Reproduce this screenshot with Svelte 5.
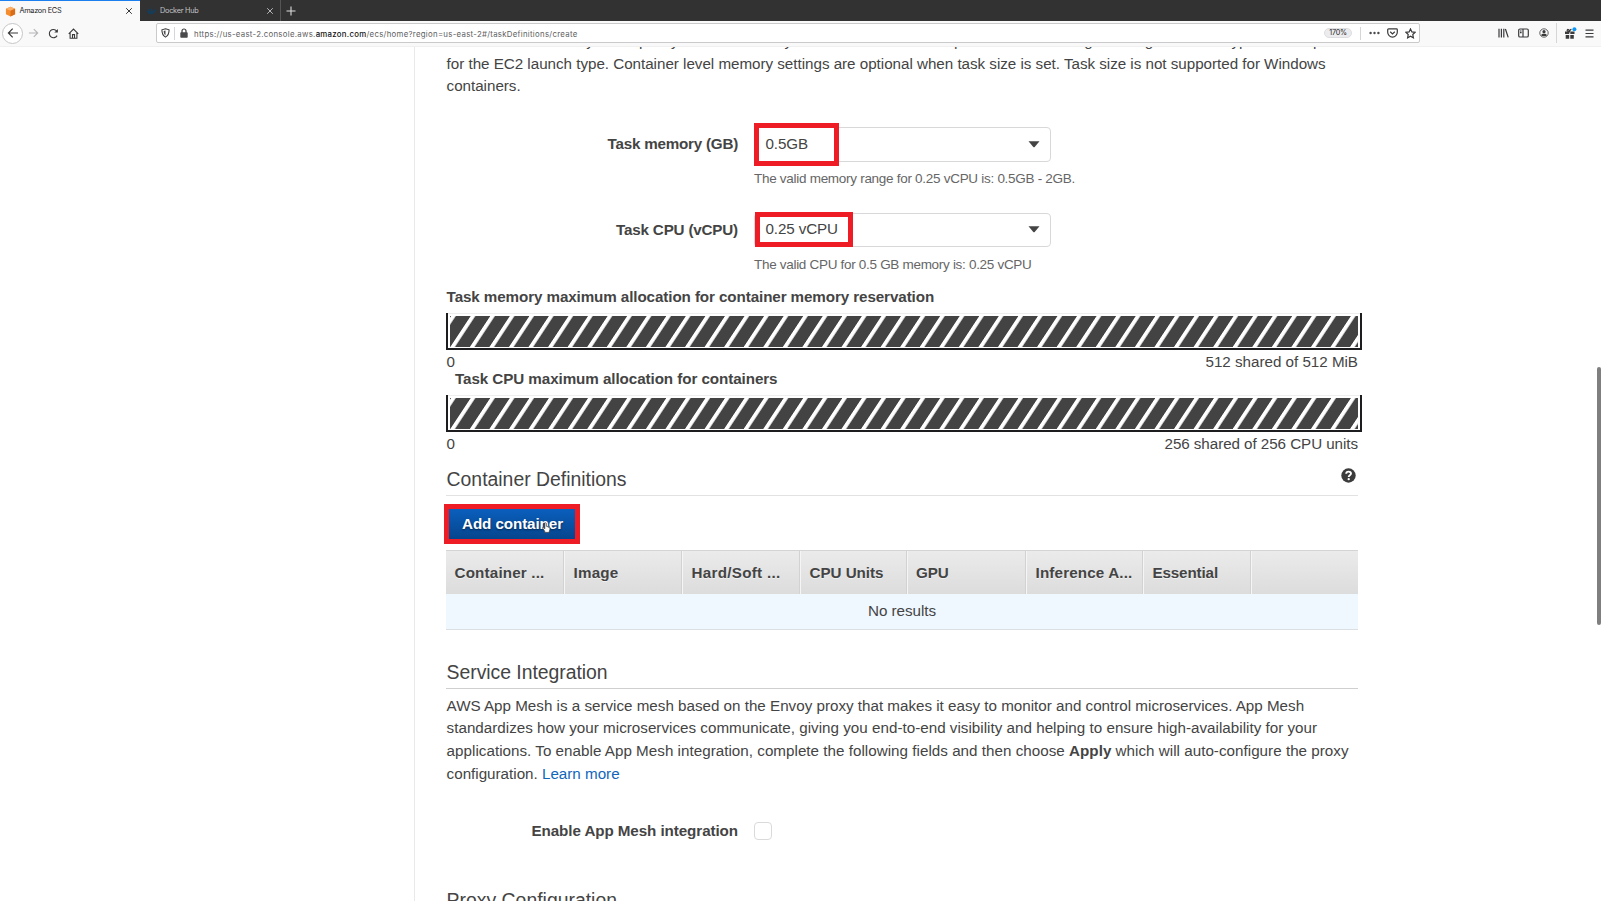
<script>
  // Spreads the letters of a line evenly so that it fills the given width.
  function fit(node, width) {
    const natural = node.getBoundingClientRect().width;
    node.style.letterSpacing = `${(width - natural) / node.textContent.length}px`;
  }

  const intro = [
    ['The task size allows you to specify a fixed size for your task. Task size is required for tasks using the Fargate launch type and is optional', 911],
    ['for the EC2 launch type. Container level memory settings are optional when task size is set. Task size is not supported for Windows', 879],
    ['containers.', 74],
  ];

  const fields = [
    { id: 'mem', label: 'Task memory (GB)', lw: 130.5, value: '0.5GB', vw: 42.5, hint: 'The valid memory range for 0.25 vCPU is: 0.5GB - 2GB.', hw: 321 },
    { id: 'cpu', label: 'Task CPU (vCPU)', lw: 122, value: '0.25 vCPU', vw: 72.5, hint: 'The valid CPU for 0.5 GB memory is: 0.25 vCPU', hw: 277.5 },
  ];

  const bars = [
    { title: 'Task memory maximum allocation for container memory reservation', tw: 487.5, total: '512 shared of 512 MiB', w: 152.5 },
    { title: 'Task CPU maximum allocation for containers', tw: 322.5, total: '256 shared of 256 CPU units', w: 193.5 },
  ];

  const columns = [
    ['Container ...', 90], ['Image', 45], ['Hard/Soft ...', 89], ['CPU Units', 74],
    ['GPU', 32.5], ['Inference A...', 97], ['Essential', 65.5], ['', 0],
  ];
</script>

<div class="window">
  <header>
    <div class="tabs">
      <div class="tab active">
        <svg class="cube" viewBox="0 0 12 12"><path fill="#f58d2f" d="M6 .7 11 3v6L6 11.5 1 9V3z"/><path fill="#f9b06b" d="M6 .7 11 3 6 5.3 1 3z"/><path fill="#d96c16" d="M6 5.3 11 3v6l-5 2.5z"/></svg>
        <span class="name"><span class="f" use:fit={41.8}>Amazon ECS</span></span>
        <svg class="x" viewBox="0 0 8 8"><path d="m1.2 1.2 5.6 5.6m0-5.6L1.2 6.8"/></svg>
      </div>
      <div class="tab">
        <svg class="cube" viewBox="0 0 12 12"><path fill="#173c58" d="M1 6h8.3c.2-1 .6-1.5 1-1.9.5.4.7.9.6 1.5l1 .2c-.3.8-.9 1-1.6 1C9.5 9 7.8 10 5.3 10 2.7 10 1.1 8.7 1 6zM2 4.300h1.300v1.200H2zm1.700 0H5v1.200H3.700zm1.700 0h1.300v1.200H5.400zm0-1.600h1.300v1.200H5.400z"/></svg>
        <span class="name"><span class="f" use:fit={38.5}>Docker Hub</span></span>
        <svg class="x" viewBox="0 0 8 8"><path d="m1.200 1.200 5.600 5.600m0-5.600L1.200 6.800"/></svg>
      </div>
      <svg class="plus" viewBox="0 0 10 10"><path d="M5 .5v9M.5 5h9"/></svg>
    </div>
    <div class="nav">
      <span class="back"><svg width="12" height="12" viewBox="0 0 12 12"><path d="M11 6H1.500M5.700 1.700 1.400 6l4.300 4.300"/></svg></span>
      <svg class="fwd" width="11" height="12" viewBox="0 0 12 12"><path d="M1 6h9.500M6.300 1.700 10.600 6l-4.300 4.300"/></svg>
      <svg class="reload" width="11" height="11" viewBox="0 0 12 12"><path d="M9.900 8.300a4.500 4.500 0 1 1-.4-5"/><path d="M10.800 1v4H6.900z" fill="#3a3a3c" stroke="none"/></svg>
      <svg class="home" width="11" height="11" viewBox="0 0 12 12"><path d="M.8 6.300 6 1.100l5.200 5.200M2.300 5.500v5.600h7.400V5.500M4.900 11V7.200h2.200V11"/></svg>
      <div class="url">
        <svg class="shield" width="9" height="10" viewBox="0 0 10 11"><path d="M5 .8 9 2c0 4-.8 6.500-4 8.100C1.800 8.500 1 6 1 2z"/><path d="M5 2.800v5.400C3.500 7.200 3 5.500 3 3.400z" fill="#4a4a4c" stroke="none"/></svg>
        <i class="sep s1"></i>
        <svg class="lock" width="8" height="10" viewBox="0 0 8 10"><path d="M2 5V3a2 2 0 0 1 4 0v2" fill="none"/><rect x=".3" y="4.300" width="7.400" height="5.400" rx=".8" fill="#4a4a4c" stroke="none"/></svg>
        <span class="addr"><span class="f" use:fit={383.5}>https://us-east-2.console.aws.<b>amazon.com</b>/ecs/home?region=us-east-2#/taskDefinitions/create</span></span>
        <span class="zoom"><span class="f" use:fit={17.5}>170%</span></span>
        <i class="sep s2"></i>
        <svg class="dots" width="11" height="4" viewBox="0 0 11 4"><g fill="#4a4a4c" stroke="none"><circle cx="1.600" cy="2" r="1.200"/><circle cx="5.500" cy="2" r="1.200"/><circle cx="9.400" cy="2" r="1.200"/></g></svg>
        <svg class="pocket" width="11" height="10" viewBox="0 0 11 10"><path d="M1.500.9h8q.8 0 .8.800v2.600a4.800 4.800 0 0 1-9.600 0V1.700q0-.8.8-.8z"/><path d="m3.200 3.700 2.300 2.200 2.300-2.200"/></svg>
        <svg class="star" width="11" height="11" viewBox="0 0 11 11"><path d="m5.500.9 1.400 3 3.200.4-2.300 2.200.6 3.300-2.900-1.600-2.900 1.600.6-3.300L.9 4.300l3.200-.4z"/></svg>
      </div>
      <svg class="lib" width="11" height="10" viewBox="0 0 11 10"><path d="M1 .8v8.600M3.400.8v8.600M5.800.8v8.600M7.400 1l2.800 8.400"/></svg>
      <svg class="side" width="11" height="10" viewBox="0 0 11 10"><rect x=".7" y="1" width="9.600" height="8" rx="1.300"/><path d="M5 1v8M2 3h1.600M2 4.600h1.600"/></svg>
      <svg class="acct" width="10" height="10" viewBox="0 0 10 10"><circle cx="5" cy="5" r="4.200" stroke-width=".8"/><g fill="#3a3a3c" stroke="none"><circle cx="5" cy="3.700" r="1.600"/><path d="M2.200 7.300C2.400 5.800 3.500 5.700 5 5.700s2.600.1 2.800 1.600C6.700 8.500 3.300 8.500 2.200 7.300z"/></g></svg>
      <i class="sep s3"></i>
      <svg class="gift" width="13" height="13" viewBox="0 0 13 13"><path fill="#3a3a3c" stroke="none" d="M1 4.500h4.200V7H1zM6.300 4.500h4.200V7H6.300zM1.700 8h3.500v3.800H1.700zM6.300 8h3.500v3.800H6.300z"/><path d="M5.700 4.200C3.500 4.600 2.800 3.500 3.300 2.800c.7-.9 2 0 2.400 1.400.4-1.400 1-2 1.800-1.700"/><circle cx="10.400" cy="2.300" r="2" fill="#0a96f5" stroke="none"/></svg>
      <svg class="menu" width="9" height="9" viewBox="0 0 9 9"><path d="M.5 1.200h8M.5 4.500h8M.5 7.800h8"/></svg>
    </div>
  </header>

  <div class="page">
    <aside></aside>
    <main>
      <p class="intro">
        {#each intro as [text, w]}<span class="line"><span class="f" use:fit={w}>{text}</span></span>{/each}
      </p>

      {#each fields as d}
        <div class="field {d.id}">
          <label for={d.id}><span class="f" use:fit={d.lw}>{d.label}</span></label>
          <div class="control">
            <div class="select" id={d.id}>
              <span class="f" use:fit={d.vw}>{d.value}</span>
              <svg width="12" height="7" viewBox="0 0 12 7"><path d="M.5.300h11L6.700 6q-.7.700-1.400 0z" fill="#444"/></svg>
              <i class="mark"></i>
            </div>
            <div class="hint"><span class="f" use:fit={d.hw}>{d.hint}</span></div>
          </div>
        </div>
      {/each}

      {#each bars as b, i}
        <section class="alloc a{i}">
          <h4><span class="f" use:fit={b.tw}>{b.title}</span></h4>
          <div class="bar">
            <svg width="908" height="31">
              <defs><pattern id="stripe{i}" width="19.560" height="31" patternUnits="userSpaceOnUse" patternTransform="skewX(-33.4)" x="1.150"><rect width="19.560" height="31" fill="#434343"/><rect width="4.600" height="31" fill="#fff"/></pattern></defs>
              <rect width="908" height="31" fill="url(#stripe{i})"/>
            </svg>
          </div>
          <div class="scale"><span>0</span><span class="f" use:fit={b.w}>{b.total}</span></div>
        </section>
      {/each}

      <h2 class="defs"><span class="f" use:fit={180.5}>Container Definitions</span>
        <svg width="15" height="15" viewBox="0 0 15 15"><circle cx="7.500" cy="7.500" r="7.200" fill="#3c3c3c"/><path d="M5.200 5.800C5.200 3 10 3 10 5.600c0 1.700-2.300 1.600-2.300 3.300" fill="none" stroke="#fff" stroke-width="1.900"/><circle cx="7.700" cy="11.200" r="1.150" fill="#fff"/></svg>
      </h2>

      <button><span class="f" use:fit={101}>Add container</span>
        <svg class="hand" width="9" height="11" viewBox="0 0 10 13"><path d="M3 8 1.300 6.300C.4 5.700.2 7 .9 7.800l2 3.200v1.300h5L9 9V6.400q-.8-.9-1.400 0V5.700q-.7-.8-1.400 0V5.200q-.7-.7-1.400 0V1.500Q3.900.3 3 1.500z" fill="#fff" stroke="#333" stroke-width=".8"/></svg>
      </button>

      <div class="table">
        <div class="head">{#each columns as [c, w]}<div>{#if c}<span class="f" use:fit={w}>{c}</span>{/if}</div>{/each}</div>
        <div class="empty"><span class="f" use:fit={68}>No results</span></div>
      </div>

      <h2 class="svc"><span class="f" use:fit={161.5}>Service Integration</span></h2>
      <p class="mesh">
        <span class="line"><span class="f" use:fit={857.5}>AWS App Mesh is a service mesh based on the Envoy proxy that makes it easy to monitor and control microservices. App Mesh</span></span>
        <span class="line"><span class="f" use:fit={870.5}>standardizes how your microservices communicate, giving you end-to-end visibility and helping to ensure high-availability for your</span></span>
        <span class="line"><span class="f" use:fit={902}>applications. To enable App Mesh integration, complete the following fields and then choose <b>Apply</b> which will auto-configure the proxy</span></span>
        <span class="line"><span class="f" use:fit={173}>configuration. <a href="#learn">Learn more</a></span></span>
      </p>
      <div class="enable"><b><span class="f" use:fit={206.5}>Enable App Mesh integration</span></b><i></i></div>
      <h2 class="proxy"><span class="f" use:fit={171}>Proxy Configuration</span></h2>
    </main>
    <i class="thumb"></i>
  </div>
</div>

<style>
  :global(body) { margin: 0; overflow: hidden; background: #fff; }
  .window { width: 1601px; height: 901px; overflow: hidden; display: flex; flex-direction: column; font-family: "Liberation Sans", Arial, sans-serif; font-size: 15.2px; line-height: 22.7px; color: #444; }
  .window * { box-sizing: border-box; }
  .f { display: inline-block; white-space: nowrap; }
  svg { display: block; flex: none; }
  header { height: 47px; flex: none; background: #f9f9fa; border-bottom: 1px solid #f0f0f1; font-family: Inter, Roboto, sans-serif; line-height: 10px; }
  .tabs { height: 21px; background: #323232; display: flex; align-items: stretch; }
  .tab { width: 141px; display: flex; align-items: center; padding: 0 6px 0 6px; border-right: 1px solid #555; color: #c4c4c6; font-size: 7.3px; }
  .tab.active { width: 140px; background: #f9f9fa; border-right: 0; border-top: 1.5px solid #1b7ff0; color: #222; padding-left: 5px; padding-right: 7px; }
  .cube { width: 11px; height: 11px; }
  .name { flex: 1; margin-left: 3.5px; display: flex; }
  .tab:not(.active) .name { margin-left: 3px; }
  .x { width: 8px; height: 8px; fill: none; stroke: currentColor; stroke-width: .9; }
  .plus { width: 10px; height: 10px; align-self: center; margin-left: 5px; fill: none; stroke: #ddd; stroke-width: 1.1; }
  .nav { height: 24px; display: flex; align-items: center; padding-left: 2px; }
  .nav svg { fill: none; stroke: #3a3a3c; stroke-width: 1.2; }
  .back { width: 21px; height: 21px; border: 1px solid #c6c6c8; border-radius: 50%; display: grid; place-items: center; background: #fff; }
  .nav .fwd { margin-left: 5px; stroke: #b5b5b7; }
  .reload { margin-left: 9px; }
  .home { margin-left: 9px; }
  .url { margin-left: 76.5px; width: 1264px; height: 20px; border: 1px solid #cacacc; border-radius: 2px; background: #fff; display: flex; align-items: center; padding-left: 4.5px; }
  .sep { width: 1px; height: 13px; background: #d6d6d8; }
  .s1 { margin: 0 5px 0 4px; }
  .addr { margin-left: 6px; flex: 1; display: flex; padding-top: 1px; font-size: 7.8px; color: #606062; }
  .addr b { color: #111; font-weight: 500; }
  .zoom { width: 28px; height: 10px; margin-right: -3px; border-radius: 5px; background: #ececee; border: 1px solid #dedee0; display: flex; align-items: center; justify-content: center; font-size: 7.2px; color: #222; line-height: 8px; }
  .s2 { margin: 0 7px 0 11px; }
  .dots { margin-left: 1px; }
  .pocket { margin-left: 7px; }
  .star { margin: 0 2.5px 0 7px; }
  .lib { margin-left: 78.5px; }
  .side { margin-left: 9px; }
  .acct { margin-left: 10px; }
  .s3 { height: 20px; margin: 0 7px 0 7px; }
  .menu { margin-left: 8px; }

  .page { flex: 1; min-height: 0; display: flex; position: relative; overflow: hidden; }
  aside { width: 415px; flex: none; border-right: 1px solid #e9e9e9; }
  main { width: 912px; flex: none; margin-left: 31px; }
  p { margin: 0; }
  p, h2 span, h4, .scale { padding-left: .6px; }
  .line { display: block; height: 22.7px; }
  .intro { margin-top: -17px; height: 68px; margin-bottom: 29px; }
  .field { display: flex; height: 86px; }
  .field.cpu { height: 77px; }
  label { width: 292px; text-align: right; font-weight: bold; line-height: 34px; }
  .control { margin-left: 16px; }
  .select { position: relative; width: 297px; height: 35px; border: 1px solid #d8d8d8; border-radius: 4px; padding: 0 10.5px 1px; display: flex; align-items: center; justify-content: space-between; }
  .cpu .select { height: 34px; margin-bottom: 9px; }
  .mark { position: absolute; left: -1px; top: -5px; width: 85px; height: 43px; border: 5px solid #ee1c24; }
  .cpu .mark { left: 0; top: -2px; width: 98px; height: 35px; }
  .hint { font-size: 13.5px; line-height: 17px; margin-top: 8px; color: #666; }
  h4 { margin: 0; font-size: 15.2px; line-height: 22px; height: 27px; }
  .alloc { height: 82px; }
  .a0 { margin-top: -4px; }
  .a1 h4 { padding-left: 9px; }
  .bar { width: 916px; height: 37px; border: 2px solid #1d1d1f; border-top: 0; padding: 3px 0 0 2px; box-shadow: inset 0 1px #eee; }
  .scale { display: flex; justify-content: space-between; line-height: 24px; height: 24px; margin-top: -.5px; }
  .a1 .scale { margin-top: 0; }
  h2 { margin: 0; font-weight: normal; font-size: 19.4px; line-height: 26px; }
  .defs { display: flex; justify-content: space-between; height: 30px; margin-top: 16px; border-bottom: 1.5px solid #e2e2e2; }
  .defs svg { margin: 2px 2px 0 0; }
  button { position: relative; display: block; width: 136px; height: 40px; margin: 7.5px 0 6px -2px; padding: 0 0 0 1px; border: 5px solid #ee1c24; background: linear-gradient(#0a5fbd, #06458d); color: #fff; font: bold 15.2px/29px "Liberation Sans", Arial, sans-serif; text-shadow: 0 1px 2px #0008; }
  .hand { position: absolute; left: 93px; top: 13px; }
  .table { height: 80px; }
  .head { height: 44px; display: grid; grid-template-columns: 119px 118px 118px 106.5px 119.5px 117px 107.5px 1fr; background: linear-gradient(#ebebeb, #dcdcdc); border-top: 1px solid #d4d4d4; font-weight: bold; line-height: 43px; text-shadow: 0 1px #fff8; }
  .head div { padding-left: 8.5px; border-right: 1px solid #f5f5f5; box-shadow: -1px 0 #d2d2d2 inset; }
  .head div:last-child { border: 0; box-shadow: none; }
  .empty { height: 36px; background: #eff7ff; border-bottom: 1px solid #dcdfe2; line-height: 33px; text-align: center; }
  .svc { height: 30px; margin-top: 29px; border-bottom: 1px solid #cfcfcf; }
  .mesh { margin-top: 6px; }
  a { color: #1166bb; text-decoration: none; }
  .enable { display: flex; align-items: center; height: 22px; margin-top: 35px; }
  .enable b { width: 292px; text-align: right; }
  .enable i { width: 18px; height: 18px; border: 1px solid #dadada; border-radius: 4px; margin-left: 16px; }
  .proxy { margin-top: 45px; }
  .thumb { position: absolute; right: 0; top: 320px; width: 4px; height: 258px; border-radius: 2px; background: #7f7f7f; }
</style>
